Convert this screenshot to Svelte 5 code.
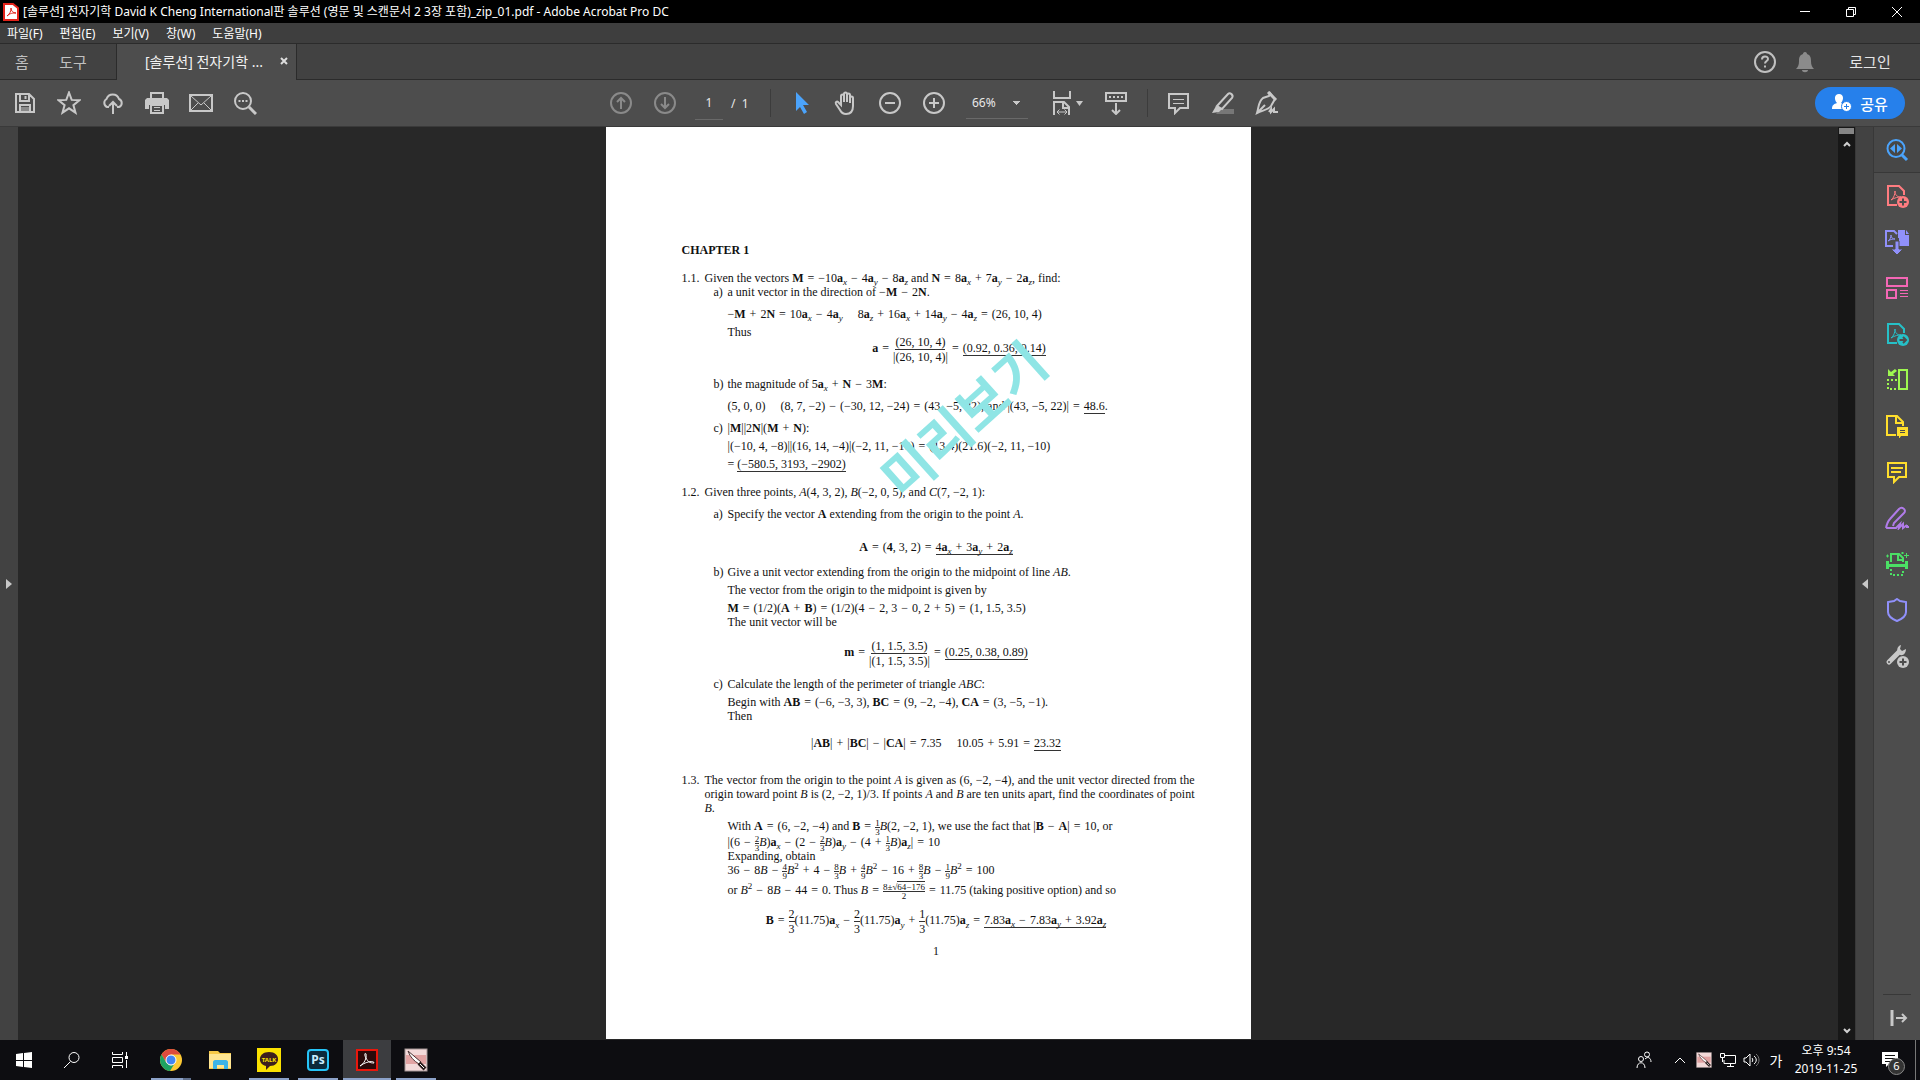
<script>
    let page = $state('1');
    let zoom = $state('66%');

    const menus = ['파일(F)', '편집(E)', '보기(V)', '창(W)', '도움말(H)'];
    const quick = ['save', 'star', 'cloud', 'print', 'mail', 'search'];
    const side = ['inspect', 'create', 'combine', 'organize', 'export', 'compress', 'review', 'comment', 'sign', 'scan', 'protect', 'more'];
    const apps = [
        { id: 'chrome', open: true, stacked: true },
        { id: 'explorer' },
        { id: 'talk', open: true },
        { id: 'photoshop', open: true },
        { id: 'acrobat', open: true, active: true },
        { id: 'knife', open: true }
    ];

    // *bold*  ~italic~  [underlined]  {top/bottom}  a_x  ^2
    const lines = [
        { kind: 'item g14', mark: '1.1.', text: 'Given the vectors *M* = −10a_x − 4a_y − 8a_z and *N* = 8a_x + 7a_y − 2a_z, find:' },
        { kind: 'part', mark: 'a)', text: 'a unit vector in the direction of −*M* − 2*N*.' },
        { kind: 'body g8', text: '−*M* + 2*N* = 10a_x − 4a_y \u00a0 \u00a0 8a_z + 16a_x + 14a_y − 4a_z = (26, 10, 4)' },
        { kind: 'body g4', text: 'Thus' },
        { kind: 'show inner', text: '*a* = {(26, 10, 4)/|(26, 10, 4)|} = [(0.92, 0.36, 0.14)]' },
        { kind: 'part g18', mark: 'b)', text: 'the magnitude of 5a_x + *N* − 3*M*:' },
        { kind: 'body g8', text: '(5, 0, 0) \u00a0 \u00a0 (8, 7, −2) − (−30, 12, −24) = (43, −5, 22), and |(43, −5, 22)| = [48.6].' },
        { kind: 'part g8', mark: 'c)', text: '|*M*||2*N*|(*M* + *N*):' },
        { kind: 'body g4', text: '|(−10, 4, −8)||(16, 14, −4)|(−2, 11, −10) = (13.4)(21.6)(−2, 11, −10)' },
        { kind: 'body g4', text: '= [(−580.5, 3193, −2902)]' },
        { kind: 'item g14', mark: '1.2.', text: 'Given three points, ~A~(4, 3, 2), ~B~(−2, 0, 5), and ~C~(7, −2, 1):' },
        { kind: 'part g8', mark: 'a)', text: 'Specify the vector *A* extending from the origin to the point ~A~.' },
        { kind: 'show g16', text: '*A* = (*4*, 3, 2) = [4a_x + 3a_y + 2a_z]' },
        { kind: 'part g8', mark: 'b)', text: 'Give a unit vector extending from the origin to the midpoint of line ~AB~.' },
        { kind: 'body g4', text: 'The vector from the origin to the midpoint is given by' },
        { kind: 'body g4', text: '*M* = (1/2)(*A* + *B*) = (1/2)(4 − 2, 3 − 0, 2 + 5) = (1, 1.5, 3.5)' },
        { kind: 'body', text: 'The unit vector will be' },
        { kind: 'show g14', text: '*m* = {(1, 1.5, 3.5)/|(1, 1.5, 3.5)|} = [(0.25, 0.38, 0.89)]' },
        { kind: 'part g14', mark: 'c)', text: 'Calculate the length of the perimeter of triangle ~ABC~:' },
        { kind: 'body g4', text: 'Begin with *AB* = (−6, −3, 3), *BC* = (9, −2, −4), *CA* = (3, −5, −1).' },
        { kind: 'body', text: 'Then' },
        { kind: 'show g10', text: '|*AB*| + |*BC*| − |*CA*| = 7.35 \u00a0 \u00a0 10.05 + 5.91 = [23.32]' },
        { kind: 'item three g20', mark: '1.3.', text: 'The vector from the origin to the point ~A~ is given as (6, −2, −4), and the unit vector directed from the origin toward point ~B~ is (2, −2, 1)/3. If points ~A~ and ~B~ are ten units apart, find the coordinates of point ~B~.' },
        { kind: 'body g4', text: 'With *A* = (6, −2, −4) and *B* = {1/3}~B~(2, −2, 1), we use the fact that |*B* − *A*| = 10, or' },
        { kind: 'body g2', text: '|(6 − {2/3}~B~)a_x − (2 − {2/3}~B~)a_y − (4 + {1/3}~B~)a_z| = 10' },
        { kind: 'body', text: 'Expanding, obtain' },
        { kind: 'body', text: '36 − 8~B~ − {4/9}~B~^2 + 4 − {8/3}~B~ + {4/9}~B~^2 − 16 + {8/3}~B~ − {1/9}~B~^2 = 100' },
        { kind: 'body g6', text: 'or ~B~^2 − 8~B~ − 44 = 0. Thus ~B~ = {8±√64−176/2} = 11.75 (taking positive option) and so' },
        { kind: 'show g14', text: '*B* = {2/3}(11.75)a_x − {2/3}(11.75)a_y + {1/3}(11.75)a_z = [7.83a_x − 7.83a_y + 3.92a_z]' },
        { kind: 'show g10', text: '1' }
    ];

    function tokens(text) {
        return text.split(/(\*[^*]+\*|~[^~]+~|\[[^\]]+\]|\{[^}]+\}|a_[xyz]|\^2| [=+−] )/).filter((t) => t !== '');
    }
</script>

{#snippet math(text)}{#each tokens(text) as t}{#if t[0] === '*'}<b>{t.slice(1, -1)}</b>{:else if t[0] === '~'}<i>{t.slice(1, -1)}</i>{:else if t[0] === '['}<u>{@render math(t.slice(1, -1))}</u>{:else if t[0] === '{'}{@const [top, bottom] = t.slice(1, -1).split('/')}{@const [lead, root] = top.split('√')}<span class="frac"><span>{lead}{#if root}√<span class="root">{root}</span>{/if}</span><span>{bottom}</span></span>{:else if t.startsWith('a_')}<b>a</b><sub><i>{t[2]}</i></sub>{:else if t[0] === '^'}<sup>2</sup>{:else if /^ [=+−] $/.test(t)}<span class="op">{t.trim()}</span>{:else}{t}{/if}{/each}{/snippet}

{#snippet knife()}
    <rect x="1" y="1" width="22" height="22" fill="#f3d9d9" stroke="#a39595" />
    <rect x="2" y="7" width="20" height="9" fill="#e2a3a3" />
    <path d="M4 3 17 14l-2 2C10 13 6 9 4 3z" fill="#fff" stroke="#4a3232" />
    <path d="m15 15 6 6" stroke="#2b1d1d" stroke-width="4" />
    <path d="m16 16 4 4" stroke="#fff" stroke-width="1" />
{/snippet}

{#snippet quickIcon(name)}
    <svg class="ico" viewBox="0 0 24 24">
        {#if name === 'save'}
            <path d="M3 3h13l5 5v13H3z M7 3v7h9V3 M12.500 5v3 M7 21v-7h10v7" />
            <path d="M8 16h8v4H8z" fill="#8a8a8a" stroke="none" />
        {:else if name === 'star'}
            <path d="m12 1.500 2.700 7.400 7.800.3-6.100 4.900 2.100 7.600-6.500-4.400-6.500 4.400 2.100-7.600-6.100-4.900 7.800-.3z" />
        {:else if name === 'cloud'}
            <path d="M8 16H6a4.500 4.500 0 0 1-.5-8A6.600 6.600 0 0 1 18 8a4.300 4.300 0 0 1 0 8h-2 M12 23V11 M8 15l4-4 4 4" />
        {:else if name === 'print'}
            <path d="M6 7V2h12v5" />
            <path d="M0 9l2-2h20l2 2v9h-4v-4H4v4H0z" fill="#c8c8c8" stroke="none" />
            <path d="M6 14h12v8H6z" />
            <path d="M9 16.500h6 M9 19.500h6" stroke-width="1" />
        {:else if name === 'mail'}
            <path d="M1 4h22v16H1z" /><path d="M2 5l10 9 10-9 M2 19l7-7 M22 19l-7-7" stroke-width="1" />
        {:else}
            <circle cx="10" cy="10" r="8" /><path d="m16 16 7 7" stroke-width="3" />
            <path d="M5.500 10h2 M9 10h2 M12.500 10h2" />
        {/if}
    </svg>
{/snippet}

{#snippet pdf()}
    <path d="M12 21H3V2h11l5 5v4" />
    <path d="M6 16c3-2 4-6 4-9 0 4 2 6 6 6-3 0-6 .5-10 3z" stroke-width="1" />
{/snippet}

{#snippet sideIcon(name)}
    <svg class="ico" viewBox="0 0 24 24">
        {#if name === 'inspect'}
            <circle cx="11" cy="10.500" r="8.500" /><path d="m17 17 5 5" stroke-width="3" />
            <path d="M10 6v9l-5-4.500z M12 6v9l5-4.500z" fill="currentColor" stroke="none" />
        {:else if name === 'create' || name === 'export'}
            {@render pdf()}
            <circle cx="18" cy="18" r="6" fill="currentColor" stroke="none" />
            <path d={name === 'create' ? 'M18 14.500v7 M14.500 18h7' : 'M14.500 18h6 M18 15l3 3-3 3'} stroke="#4d4d4d" />
        {:else if name === 'combine'}
            <path d="M8 16H1V1h8l3 3" />
            <path d="M3 11c2-1 3-4 3-6 0 3 2 4 4 4-2 0-4 0-7 2z" stroke-width="1" />
            <path d="M13 0h7v5h4v11H14V8h-1z M21 0l3 4h-3z" fill="currentColor" stroke="none" />
            <path d="M10 11h4v8h4l-6 6-6-6h4z" fill="currentColor" stroke="#4d4d4d" stroke-width="1" />
        {:else if name === 'organize'}
            <path d="M2 2h20v8H2z M2 14h9v8H2z" /><path d="M15 14.500h8 M15 17.500h8 M15 20.500h8" stroke-width="1" />
        {:else if name === 'compress'}
            <path d="M14 2h8v19h-8z" /><path d="M12 12H3v9h9" stroke-dasharray="2 2" />
            <path d="M3 1v7h7L8 6l4-3-2-2-4 3z" fill="currentColor" stroke="none" />
        {:else if name === 'review'}
            <path d="M11 21H2V2h10l6 6v4 M11 3v6h6" />
            <path d="M12 13h11v9h-7l-2 3v-3h-2z" fill="currentColor" stroke="none" />
            <path d="M15 16.500h5 M15 18.500h5" stroke="#4d4d4d" stroke-width="1" />
        {:else if name === 'comment'}
            <path d="M3 3h18v14h-7l-5 5v-5H3z M6 8h12 M6 12h10" />
        {:else if name === 'sign'}
            <path d="M1 22c1-5 2-7 4-9L14 3c3-3 8 1 5 4L9 17l-1 3 M1 22h10l4-4-1 4 4-4v4l4-3 M22 19v2h2" />
        {:else if name === 'scan'}
            <path d="M6 10V2h8l4 4v4 M13 3v5h5" />
            <path d="M1 9h3v3h16V9h3v8h-3v-2H4v2H1z" fill="currentColor" stroke="none" />
            <path d="M6 17v6h12v-6" stroke-dasharray="2 2" />
            <path d="M1 4h3 M2.500 2.500v3 M16 1h3 M17.500 -1v3 M19 3.500h5 M21.500 1v5" stroke-width="1" />
        {:else if name === 'protect'}
            <path d="m12 1 3 2 6 1v10c0 4-4 7-9 9-5-2-9-5-9-9V4l6-1z" />
        {:else}
            <path d="M4 18 14 8" stroke-width="5" stroke-linecap="round" />
            <path d="M16 1c-4 1-5 6-2 9s7 0 7-5l-4 2-2-2z" fill="currentColor" stroke="none" />
            <circle cx="4" cy="18" r="1" fill="#4d4d4d" stroke="none" />
            <circle cx="18" cy="18" r="6" fill="currentColor" stroke="none" /><path d="M18 14.500v7 M14.500 18h7" stroke="#4d4d4d" />
        {/if}
    </svg>
{/snippet}

<div class="screen">
    <header class="title">
        <svg width="16" height="18" viewBox="0 0 16 18">
            <path d="M1 1h9l5 4v12H1z" fill="#fff" stroke="#e2231a" stroke-width="2" />
            <path d="M4 13c3-2 4-5 4-8 0 3 2 5 5 5-3 0-6 0-9 3z" fill="none" stroke="#e2231a" />
        </svg>
        <h1>[솔루션] 전자기학 David K Cheng International판 솔루션 (영문 및 스캔문서 2 3장 포함)_zip_01.pdf - Adobe Acrobat Pro DC</h1>
        <button aria-label="최소화"><svg viewBox="0 0 12 12"><path d="M1 5.500h10" /></svg></button>
        <button aria-label="이전 크기로"><svg viewBox="0 0 12 12"><path d="M1.500 3.500h7v7h-7z M3.500 3.500v-2h7v7h-2" /></svg></button>
        <button aria-label="닫기"><svg viewBox="0 0 12 12"><path d="m1 1 10 10 M11 1 1 11" /></svg></button>
    </header>

    <nav class="menu">
        {#each menus as item}
            <button>{item}</button>
        {/each}
    </nav>

    <div class="tabs">
        <button class="home">홈</button>
        <button class="tools">도구</button>
        <div class="tab">
            <span>[솔루션] 전자기학 ...</span>
            <button aria-label="탭 닫기"><svg width="8" height="8" viewBox="0 0 8 8"><path d="m1 1 6 6 M7 1 1 7" stroke="#ddd" stroke-width="2" /></svg></button>
        </div>
        <button class="help" aria-label="도움말">
            <svg class="ico" viewBox="0 0 24 24"><circle cx="12" cy="12" r="10" /><path d="M9 9.500c0-4 6-4 6-.5 0 2-3 2-3 4.500 M12 15.500v2" /></svg>
        </button>
        <button class="bell" aria-label="알림">
            <svg width="20" height="22" viewBox="0 0 20 22" fill="#8b8b8b"><path d="M10 1c1.500 0 2 1 2 2 3 1 4 3 4 7 0 4 1 6 3 8H1c2-2 3-4 3-8 0-4 1-6 4-7 0-1 .5-2 2-2z M7 19h6c0 3-6 3-6 0z" /></svg>
        </button>
        <button class="login">로그인</button>
    </div>

    <div class="toolbar">
        <div class="quick">
            {#each quick as name}
                <button class="tool" aria-label={name}>{@render quickIcon(name)}</button>
            {/each}
        </div>
        <div class="center">
            <button class="tool dim" aria-label="이전 페이지"><svg class="ico" viewBox="0 0 24 24"><circle cx="12" cy="12" r="10" /><path d="M12 18V7 M8 11l4-4 4 4" /></svg></button>
            <button class="tool dim" aria-label="다음 페이지"><svg class="ico" viewBox="0 0 24 24"><circle cx="12" cy="12" r="10" /><path d="M12 6v11 M8 13l4 4 4-4" /></svg></button>
            <input class="pageno" aria-label="페이지" bind:value={page} />
            <span class="total">/&nbsp; 1</span>
            <span class="sep"></span>
            <button class="tool" aria-label="선택"><svg class="ico" viewBox="0 0 24 24"><path d="M6 1v19l4-4 4 7 3-2-4-7h6z" fill="#4ba3fb" stroke="none" /></svg></button>
            <button class="tool" aria-label="손 도구"><svg class="ico" viewBox="0 0 24 24"><path d="M7 14V5c0-2 3-2 3 0v6-8c0-2 3-2 3 0v8-7c0-2 3-2 3 0v8-5c0-2 3-2 3 0v8c0 5-2 8-7 8-4 0-5-2-6-4l-4-6c-1-2 1-3 2-2z" /></svg></button>
            <button class="tool" aria-label="축소"><svg class="ico" viewBox="0 0 24 24"><circle cx="12" cy="12" r="10" /><path d="M7 12h10" /></svg></button>
            <button class="tool" aria-label="확대"><svg class="ico" viewBox="0 0 24 24"><circle cx="12" cy="12" r="10" /><path d="M7 12h10 M12 7v10" /></svg></button>
            <select class="zoom" aria-label="배율" bind:value={zoom}><option>66%</option><option>100%</option></select>
            <button class="tool fit" aria-label="맞춤">
                <svg class="ico" viewBox="0 0 24 24"><path d="M4 0v7h16V0 M4 24V11h10l5 5v8 M13 11v6h6" /><path d="M7 21h10 M9.500 18.500 7 21l2.500 2.500 M14.500 18.500 17 21l-2.500 2.500" stroke-width="1" /></svg>
                <svg width="7" height="5" viewBox="0 0 7 5"><path d="M0 0h7L3.500 5z" fill="#c8c8c8" /></svg>
            </button>
            <button class="tool" aria-label="스크롤"><svg class="ico" viewBox="0 0 24 24"><path d="M2 2h20v8H2z M12 12v11 M8 19l4 4 4-4" /><path d="M5 6h14" stroke-dasharray="2 2" /></svg></button>
            <span class="sep"></span>
            <button class="tool" aria-label="메모"><svg class="ico" viewBox="0 0 24 24"><path d="M2 3h19v14h-8l-5 5v-5H2z" /><path d="M6 8.500h11 M6 12.500h11" stroke-width="1" /></svg></button>
            <button class="tool" aria-label="강조"><svg class="ico" viewBox="0 0 24 24"><path d="M9 18h14v5H5z" fill="#777" stroke="none" /><path d="M6 15 17 3c2-2 6 1 4 4L11 18z" /><path d="m5 15-4 7 7-1 3-3z" fill="#c8c8c8" stroke="none" /></svg></button>
            <button class="tool" aria-label="서명"><svg class="ico" viewBox="0 0 24 24"><path d="M15 2 20 8l-4 7c-3 4-8 4-14 7C4 16 3 11 8 7l6-2z M2 22l8-8" /><path d="m13 1 8 8" stroke-width="3" /><path d="m14 21 2-3v3l3-3v3h4" /></svg></button>
        </div>
        <div class="end">
            <button class="share">
                <svg width="20" height="18" viewBox="0 0 20 18"><path d="M7 0c5 0 5 6 2 9l3 2-2 4H0c0-4 2-5 5-6C2 6 2 0 7 0z" fill="#fff" /><circle cx="14.500" cy="12.500" r="5" fill="#fff" stroke="#2680eb" /><path d="M14.500 10v5 M12 12.500h5" stroke="#2680eb" /></svg>
                공유
            </button>
        </div>
    </div>

    <div class="work">
        <button class="edge" aria-label="탐색 창"><svg width="6" height="10" viewBox="0 0 6 10"><path d="M0 0v10l6-5z" fill="#c8c8c8" /></svg></button>
        <main class="canvas">
            <article class="page">
                <h2>CHAPTER 1</h2>
                {#each lines as line}
                    <div class="row {line.kind}">
                        {#if line.mark}<span class="mark">{line.mark}</span>{/if}
                        <p>{@render math(line.text)}</p>
                    </div>
                {/each}
                <div class="preview">미리보기</div>
            </article>
        </main>
        <div class="scroll">
            <span class="split"></span>
            <button aria-label="위로"><svg width="8" height="6" viewBox="0 0 8 6"><path d="m1 5 3-3 3 3" /></svg></button>
            <button class="down" aria-label="아래로"><svg width="8" height="6" viewBox="0 0 8 6"><path d="m1 1 3 3 3-3" /></svg></button>
        </div>
        <button class="edge right" aria-label="도구 창"><svg width="6" height="10" viewBox="0 0 6 10"><path d="M6 0v10L0 5z" fill="#c8c8c8" /></svg></button>
        <aside>
            {#each side as name}
                <button class={name} aria-label={name}>{@render sideIcon(name)}</button>
            {/each}
            <button class="expand" aria-label="펼치기"><svg class="ico" viewBox="0 0 24 24"><path d="M7 4v16" stroke-width="3" /><path d="M11 12h9 M17 8l4 4-4 4" stroke-width="2" /></svg></button>
        </aside>
    </div>

    <footer>
        <button aria-label="시작"><svg width="16" height="16" viewBox="0 0 16 16" fill="#fff"><path d="M0 2l7-1v7H0z M8 1l8-1v8H8z M0 9h7v6l-7-1z M8 9h8v7l-8-1z" /></svg></button>
        <button aria-label="검색"><svg class="line" width="18" height="18" viewBox="0 0 18 18"><circle cx="11" cy="6.500" r="5" /><path d="M7.500 10.500 1 17" /></svg></button>
        <button class="views" aria-label="작업 보기"><svg class="line" width="18" height="18" viewBox="0 0 18 18"><path d="M1.500 1v2.500h10V1 M1.500 6.500h10v5h-10z M1.500 17v-2.500h10V17 M15.500 1v4 M15.500 9v8" /><path d="M14 5h3v3h-3z" fill="#fff" stroke="none" /></svg></button>
        {#each apps as app}
            <button class="app" class:open={app.open} class:stacked={app.stacked} class:active={app.active} aria-label={app.id}>
                <svg width="24" height="24" viewBox="0 0 24 24">
                    {#if app.id === 'chrome'}
                        <circle cx="12" cy="12" r="11" fill="#fcc934" />
                        <path d="M2.500 6.500a11 11 0 0 1 19 0H12L7.500 15z" fill="#dd4b3e" />
                        <path d="M2.500 6.500 7.500 15l4.500 2.500 3-1-4 6.500A11 11 0 0 1 2.500 6.500z" fill="#1da362" />
                        <circle cx="12" cy="12" r="5" fill="#4285f4" stroke="#fff" stroke-width="1" />
                    {:else if app.id === 'explorer'}
                        <path d="M1 3h9l2 2h11v16H1z" fill="#f7c948" /><path d="M1 6h22v14H1z" fill="#ffe592" />
                        <path d="M5 21v-7c0-1 1-2 2-2h11c1 0 2 1 2 2v7h-4v-4H9v4z" fill="#3cb4e8" />
                    {:else if app.id === 'talk'}
                        <path d="M0 0h24v24H0z" fill="#fae100" /><path d="M12 4c12 0 12 14 1 14l-4 4v-4C0 16 1 4 12 4z" fill="#3c1e1e" />
                        <text x="12" y="14" font-size="6" font-weight="bold" text-anchor="middle" fill="#fae100">TALK</text>
                    {:else if app.id === 'photoshop'}
                        <rect x="2" y="2" width="20" height="20" rx="3" fill="#0b2a3c" stroke="#26c4f8" stroke-width="2" />
                        <text x="12" y="16" font-size="12" font-weight="bold" text-anchor="middle" fill="#c7ecff">Ps</text>
                    {:else if app.id === 'acrobat'}
                        <path d="M2 2h20v20H2z" fill="#2a0a0a" stroke="#e8170c" stroke-width="2" />
                        <path d="M5 18c4-2 7-8 6-12-1-2-2 1 0 4 2 4 4 5 8 5 0-3-9-1-14 3z" fill="none" stroke="#fff" />
                    {:else}
                        {@render knife()}
                    {/if}
                </svg>
            </button>
        {/each}
        <div class="tray">
            <button aria-label="피플"><svg class="line" width="18" height="18" viewBox="0 0 18 18"><circle cx="6" cy="8" r="2.500" /><path d="M2 17c0-7 8-7 8 0" /><circle cx="12" cy="3.500" r="2.500" /><path d="M10 8c3-3 6-1 6 3" /></svg></button>
            <button class="up" aria-label="숨겨진 아이콘"><svg class="line" width="12" height="8" viewBox="0 0 12 8"><path d="m1 7 5-5 5 5" /></svg></button>
            <button aria-label="캡처"><svg width="16" height="16" viewBox="0 0 24 24">{@render knife()}</svg></button>
            <button aria-label="네트워크"><svg class="line" width="18" height="16" viewBox="0 0 18 16"><path d="M6 3.500h10.500v8H5V8 M8 14.500h7 M11.500 12v2 M1.500 1.500h4v4h-4z M3.500 5v5" /></svg></button>
            <button aria-label="볼륨"><svg class="line" width="18" height="14" viewBox="0 0 18 14"><path d="M1 5h2l4-4v12L3 9H1z M9 5c1 1 1 3 0 4 M11 3c3 2 3 6 0 8" /><path d="M13 1c4 3 4 9 0 12" stroke="#777" /></svg></button>
            <button class="ime">가</button>
            <time><span>오후 9:54</span><span>2019-11-25</span></time>
            <button class="notes" aria-label="알림 6개">
                <svg width="18" height="16" viewBox="0 0 18 16"><path d="M1 0h16v12H8l-3 3v-3H1z" fill="#fff" /><path d="M4 3.500h10 M4 6.500h10 M4 9.500h6" stroke="#111" /></svg>
                <span class="badge">6</span>
            </button>
        </div>
    </footer>
</div>

<style>
:global(body) {
    margin: 0;
    background: #282828;
}

.screen {
    height: 100vh;
    display: flex;
    flex-direction: column;
    font-family: "Noto Sans", "Noto Sans CJK KR", sans-serif;
    font-size: 12px;
    color: #fff;
    overflow: hidden;
}

button, input, select {
    font: inherit;
    color: inherit;
    background: none;
    border: 0;
    border-radius: 0;
    padding: 0;
    margin: 0;
}

button {
    display: flex;
    align-items: center;
    justify-content: center;
    white-space: nowrap;
}

svg {
    flex: none;
    display: block;
}

.ico {
    width: 24px;
    height: 24px;
    fill: none;
    stroke: currentColor;
    stroke-width: 2;
}

.line {
    fill: none;
    stroke: #fff;
}

.title {
    height: 23px;
    display: flex;
    align-items: center;
    background: #000;
    padding-left: 3px;
}

.title h1 {
    flex: 1;
    margin: 0 0 0 4px;
    font-size: 12px;
    font-weight: normal;
    line-height: 22px;
}

.title button {
    width: 46px;
    height: 20px;
}

.title button svg {
    width: 12px;
    height: 12px;
    fill: none;
    stroke: #fff;
}

.menu {
    height: 20px;
    display: flex;
    gap: 17px;
    padding-left: 7px;
    background: #3e3e3e;
    border-bottom: 1px solid #2b2b2b;
}

.tabs {
    height: 35px;
    display: flex;
    background: #424242;
    border-bottom: 1px solid #2b2b2b;
    font-size: 15px;
    color: #c0c0c0;
}

.home {
    width: 44px;
}

.tools {
    width: 58px;
}

.tab {
    width: 181px;
    height: 36px;
    margin-left: 14px;
    box-sizing: border-box;
    padding: 0 8px 2px 28px;
    display: flex;
    align-items: center;
    justify-content: space-between;
    background: #4d4d4d;
    border: solid #2b2b2b;
    border-width: 0 1px;
    color: #f2f2f2;
    font-size: 14px;
}

.help {
    margin-left: auto;
    width: 50px;
}

.bell {
    width: 30px;
}

.login {
    width: 100px;
    color: #e6e6e6;
}

.toolbar {
    height: 46px;
    display: flex;
    align-items: center;
    background: #4d4d4d;
    border-bottom: 1px solid #3a3a3a;
    color: #c8c8c8;
}

.quick, .center, .end {
    display: flex;
    align-items: center;
}

.quick, .end {
    flex: 1;
}

.quick {
    padding-left: 3px;
}

.end {
    justify-content: flex-end;
    padding-right: 15px;
}

.tool {
    width: 44px;
    height: 44px;
}

.dim {
    color: #8a8a8a;
}

.center {
    height: 46px;
    padding-right: 20px;
}

.pageno {
    width: 28px;
    height: 32px;
    margin-left: 8px;
    text-align: center;
    border-bottom: 1px solid #696969;
    color: #e8e8e8;
}

.total {
    width: 30px;
    margin-left: 8px;
    color: #e8e8e8;
}

.sep {
    width: 1px;
    height: 28px;
    background: #3c3c3c;
    margin: 0 9px;
}

.zoom {
    appearance: none;
    width: 62px;
    height: 32px;
    margin: 0 10px;
    padding-left: 6px;
    border-bottom: 1px solid #696969;
    color: #e8e8e8;
    background: conic-gradient(from 315deg at 50% 100%, #c8c8c8 90deg, transparent 0) no-repeat right 8px center / 8px 4px;
}

.fit {
    width: 56px;
    gap: 2px;
}

.share {
    width: 90px;
    height: 32px;
    gap: 8px;
    border-radius: 16px;
    background: #2680eb;
    color: #fff;
    font-size: 15px;
    font-weight: 500;
}

.work {
    flex: 1;
    min-height: 0;
    display: flex;
}

.edge {
    width: 18px;
    background: #424242;
}

.right {
    width: 19px;
    border-left: 1px solid #383838;
    border-right: 1px solid #383838;
}

.canvas {
    flex: 1;
    display: flex;
    justify-content: center;
    background: #282828;
}

.page {
    width: 509px;
    padding: 116px 60px 0 76px;
    margin-bottom: 1px;
    position: relative;
    background: #fff;
    color: #111;
    font-family: "Liberation Serif", serif;
    font-size: 12px;
    line-height: 14px;
}

.page h2 {
    margin: 0;
    font-size: 12px;
    line-height: 14px;
}

.page p {
    margin: 0;
}

.row {
    display: flex;
    align-items: center;
    height: 14px;
    white-space: nowrap;
}

.mark {
    flex: none;
    width: 14px;
}

.item .mark {
    width: 23px;
}

.part {
    padding-left: 32px;
}

.body {
    padding-left: 46px;
}

.show {
    height: 20px;
    justify-content: center;
}

.inner {
    padding-left: 46px;
}

.three {
    height: auto;
    align-items: flex-start;
    white-space: normal;
    margin-right: -4px;
}

.three p {
    flex: 1;
    text-align: justify;
}

.g2 { margin-top: 2px; }
.g4 { margin-top: 4px; }
.g6 { margin-top: 6px; }
.g8 { margin-top: 8px; }
.g10 { margin-top: 10px; }
.g14 { margin-top: 14px; }
.g16 { margin-top: 16px; }
.g18 { margin-top: 18px; }
.g20 { margin-top: 20px; }

.page u {
    text-decoration: none;
    border-bottom: 1px solid #333;
}

.op {
    margin: 0 4px;
}

sub, sup {
    font-size: 9px;
    line-height: 0;
}

.frac {
    display: inline-flex;
    flex-direction: column;
    align-items: center;
    vertical-align: middle;
}

.frac > span:first-child {
    border-bottom: 1px solid #333;
}

.body .frac {
    font-size: 9px;
    line-height: 8px;
    margin: -4px 0;
}

.root {
    border-top: 1px solid #333;
}

.preview {
    position: absolute;
    left: 236px;
    top: 256px;
    width: 240px;
    text-align: center;
    font-family: "Noto Sans CJK KR", sans-serif;
    font-size: 54px;
    font-weight: bold;
    line-height: 70px;
    color: #8fe5e5;
    transform: rotate(-42deg);
}

.scroll {
    width: 17px;
    display: flex;
    flex-direction: column;
    align-items: center;
    background: #171717;
}

.scroll svg {
    fill: none;
    stroke: #d0d0d0;
    stroke-width: 2;
}

.scroll button {
    width: 17px;
    height: 18px;
}

.split {
    width: 15px;
    height: 6px;
    margin: 1px 0;
    background: #858585;
}

.scroll .down {
    margin-top: auto;
}

aside {
    width: 46px;
    display: flex;
    flex-direction: column;
    background: #4d4d4d;
}

aside button {
    height: 46px;
    color: #c8c8c8;
}

aside .inspect {
    color: #4ba3fb;
    background: #474747;
    border-bottom: 1px solid #383838;
}

aside .create { color: #ff7c80; }
aside .combine { color: #9090fa; }
aside .organize { color: #f467b5; }
aside .export { color: #26c0c7; }
aside .compress { color: #9ef750; }
aside .review, aside .comment { color: #ffde2c; }
aside .sign { color: #b07be8; }
aside .scan { color: #4be065; }
aside .protect { color: #9090fa; }

aside .expand {
    margin: auto 9px 0;
    border-top: 1px solid #383838;
}

footer {
    height: 40px;
    display: flex;
    background: #0d0d11;
}

footer > button {
    width: 48px;
}

.views {
    margin-right: 3px;
}

.app {
    margin-right: 1px;
    background: linear-gradient(#8ca2c9, #8ca2c9) no-repeat center bottom / 0 2px;
}

.open {
    background-size: 40px 2px;
}

.stacked {
    background-image: linear-gradient(to right, #8ca2c9 32px, #5f6f8c 32px);
}

.active {
    background-color: #3c3d40;
    background-size: 48px 2px;
}

.tray {
    margin-left: auto;
    display: flex;
    align-items: center;
    padding-right: 4px;
}

.tray button {
    width: 24px;
    height: 40px;
}

.tray .up {
    margin-left: 12px;
}

.ime {
    font-size: 14px;
}

time {
    width: 76px;
    display: flex;
    flex-direction: column;
    align-items: center;
    line-height: 18px;
}

.tray .notes {
    width: 52px;
    position: relative;
    border-right: 1px solid #777;
}

.badge {
    position: absolute;
    left: 24px;
    top: 18px;
    width: 15px;
    height: 15px;
    line-height: 14px;
    border: 1px solid #888;
    border-radius: 50%;
    background: #333;
    font-size: 11px;
    text-align: center;
}
</style>
